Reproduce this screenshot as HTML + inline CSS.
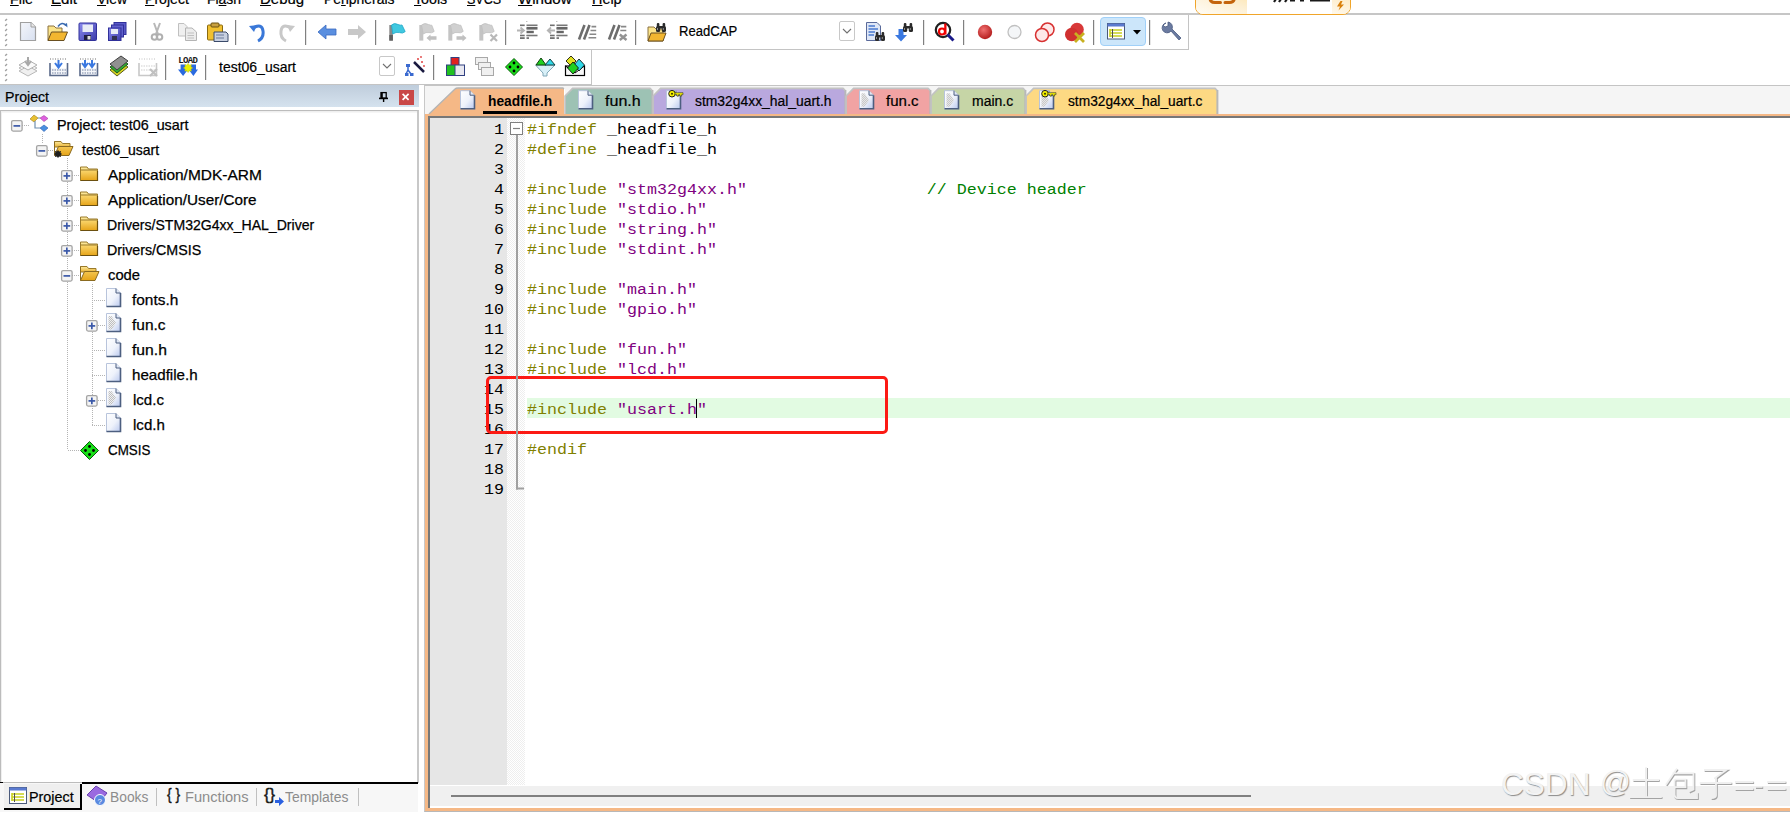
<!DOCTYPE html>
<html><head><meta charset="utf-8">
<style>
*{margin:0;padding:0;box-sizing:border-box}
html,body{width:1790px;height:814px;overflow:hidden;background:#fff;position:relative;font-family:"Liberation Sans",sans-serif;font-size:14px;color:#000}
.a{position:absolute}
.t{position:absolute;white-space:pre;line-height:1}
u{text-decoration:underline;text-underline-offset:1px}
.code{position:absolute;left:527px;top:120px;height:20px;font-family:"Liberation Mono",monospace;font-size:16.67px;line-height:20px;white-space:pre;transform:scaleY(0.86);transform-origin:0 15.6px}
.ln{position:absolute;left:430px;width:74px;top:120px;height:20px;font-family:"Liberation Mono",monospace;font-size:16.67px;line-height:20px;white-space:pre;text-align:right;transform:scaleY(0.9);transform-origin:0 15.6px}
.pp{color:#808000}.st{color:#800080}.cm{color:#008000}
svg.ov{position:absolute;left:0;top:0;width:1790px;height:814px;pointer-events:none}
</style></head><body>
<div class="t" style="left:10.01px;top:-7.67px;font-size:14.5px;color:#000;font-weight:normal;transform:scaleX(0.9865);transform-origin:0 0;;-webkit-text-stroke:0.2px #000"><u>F</u>ile</div>
<div class="t" style="left:50.96px;top:-7.67px;font-size:14.5px;color:#000;font-weight:normal;transform:scaleX(1.0435);transform-origin:0 0;;-webkit-text-stroke:0.2px #000"><u>E</u>dit</div>
<div class="t" style="left:96.50px;top:-7.67px;font-size:14.5px;color:#000;font-weight:normal;transform:scaleX(0.9623);transform-origin:0 0;;-webkit-text-stroke:0.2px #000"><u>V</u>iew</div>
<div class="t" style="left:144.73px;top:-7.67px;font-size:14.5px;color:#000;font-weight:normal;transform:scaleX(0.9728);transform-origin:0 0;;-webkit-text-stroke:0.2px #000"><u>P</u>roject</div>
<div class="t" style="left:207.04px;top:-7.67px;font-size:14.5px;color:#000;font-weight:normal;transform:scaleX(0.9595);transform-origin:0 0;;-webkit-text-stroke:0.2px #000">Fl<u>a</u>sh</div>
<div class="t" style="left:259.97px;top:-7.67px;font-size:14.5px;color:#000;font-weight:normal;transform:scaleX(1.0321);transform-origin:0 0;;-webkit-text-stroke:0.2px #000"><u>D</u>ebug</div>
<div class="t" style="left:323.74px;top:-7.67px;font-size:14.5px;color:#000;font-weight:normal;transform:scaleX(0.9613);transform-origin:0 0;;-webkit-text-stroke:0.2px #000">Pe<u>r</u>ipherals</div>
<div class="t" style="left:414.00px;top:-7.67px;font-size:14.5px;color:#000;font-weight:normal;transform:scaleX(0.9821);transform-origin:0 0;;-webkit-text-stroke:0.2px #000"><u>T</u>ools</div>
<div class="t" style="left:467.00px;top:-7.67px;font-size:14.5px;color:#000;font-weight:normal;transform:scaleX(0.8605);transform-origin:0 0;;-webkit-text-stroke:0.2px #000"><u>S</u>VCS</div>
<div class="t" style="left:518.40px;top:-7.67px;font-size:14.5px;color:#000;font-weight:normal;transform:scaleX(1.0403);transform-origin:0 0;;-webkit-text-stroke:0.2px #000"><u>W</u>indow</div>
<div class="t" style="left:591.51px;top:-7.67px;font-size:14.5px;color:#000;font-weight:normal;transform:scaleX(0.9911);transform-origin:0 0;;-webkit-text-stroke:0.2px #000"><u>H</u>elp</div>
<div class="a" style="left:0;top:13px;width:1790px;height:2px;background:#c6c6c6"></div>
<div class="a" style="left:1195px;top:-12px;width:156px;height:27px;border:1px solid #f0a52a;border-radius:8px;background:#fff;overflow:hidden"><div class="a" style="left:0;top:0;width:51px;height:27px;background:linear-gradient(20deg,#fffdf8 0%,#fdf0d4 55%,#fde2a6 100%)"></div><div class="a" style="left:136px;top:0;width:19px;height:27px;background:linear-gradient(20deg,#fffaf0,#fde4b4)"></div></div>
<div class="a" style="left:0;top:15px;width:1189px;height:35px;border-right:1px solid #c4c4c4;border-bottom:1px solid #c4c4c4;background:#fff"></div>
<div class="a" style="left:0;top:50px;width:592px;height:35px;border-right:1px solid #c4c4c4;border-bottom:1px solid #c4c4c4;background:#fff"></div>
<div class="t" style="left:678.67px;top:24.05px;font-size:14px;color:#000;font-weight:normal;transform:scaleX(0.9341);transform-origin:0 0;-webkit-text-stroke:0.2px #000">ReadCAP</div>
<div class="a" style="left:839px;top:21px;width:16px;height:20px;border:1px solid #c8c8c8;border-radius:2px;background:#fff"></div>
<div class="a" style="left:1100px;top:17px;width:46px;height:29px;background:#cce6fa;border:1px solid #a0d0f8;border-radius:4px"></div>
<div class="t" style="left:218.70px;top:60.15px;font-size:14px;color:#000;font-weight:normal;transform:scaleX(0.9992);transform-origin:0 0;;-webkit-text-stroke:0.2px #000">test06_usart</div>
<div class="a" style="left:379px;top:56px;width:16px;height:20px;border:1px solid #c8c8c8;border-radius:2px;background:#fff"></div>
<div class="a" style="left:0;top:85px;width:419px;height:22px;background:linear-gradient(#bfcddc,#d5e2ee)"></div>
<div class="t" style="left:4.59px;top:89.95px;font-size:14px;color:#000;font-weight:normal;transform:scaleX(1.0098);transform-origin:0 0;;-webkit-text-stroke:0.2px #000">Project</div>
<div class="a" style="left:399px;top:90px;width:15px;height:15px;background:#c94848"></div>
<div class="a" style="left:0;top:110px;width:419px;height:673px;border:1px solid #bcbcbc;border-right:2px solid #c8c8c8;background:#fff;box-shadow:inset 1px 1px 0 #efefef, inset 0 2px 0 #f6f6f6"></div>
<div class="t" style="left:57.01px;top:117.93px;font-size:14.5px;color:#000;font-weight:normal;transform:scaleX(0.9890);transform-origin:0 0;-webkit-text-stroke:0.25px #000">Project: test06_usart</div>
<div class="t" style="left:82.40px;top:142.93px;font-size:14.5px;color:#000;font-weight:normal;transform:scaleX(0.9665);transform-origin:0 0;-webkit-text-stroke:0.25px #000">test06_usart</div>
<div class="t" style="left:108.00px;top:167.93px;font-size:14.5px;color:#000;font-weight:normal;transform:scaleX(1.0660);transform-origin:0 0;-webkit-text-stroke:0.25px #000">Application/MDK-ARM</div>
<div class="t" style="left:108.00px;top:192.93px;font-size:14.5px;color:#000;font-weight:normal;transform:scaleX(1.0534);transform-origin:0 0;-webkit-text-stroke:0.25px #000">Application/User/Core</div>
<div class="t" style="left:107.43px;top:217.93px;font-size:14.5px;color:#000;font-weight:normal;transform:scaleX(0.9704);transform-origin:0 0;-webkit-text-stroke:0.25px #000">Drivers/STM32G4xx_HAL_Driver</div>
<div class="t" style="left:107.42px;top:242.93px;font-size:14.5px;color:#000;font-weight:normal;transform:scaleX(0.9820);transform-origin:0 0;-webkit-text-stroke:0.25px #000">Drivers/CMSIS</div>
<div class="t" style="left:107.70px;top:267.93px;font-size:14.5px;color:#000;font-weight:normal;transform:scaleX(1.0198);transform-origin:0 0;-webkit-text-stroke:0.25px #000">code</div>
<div class="t" style="left:132.30px;top:292.93px;font-size:14.5px;color:#000;font-weight:normal;transform:scaleX(1.0629);transform-origin:0 0;-webkit-text-stroke:0.25px #000">fonts.h</div>
<div class="t" style="left:132.30px;top:317.93px;font-size:14.5px;color:#000;font-weight:normal;transform:scaleX(1.0678);transform-origin:0 0;-webkit-text-stroke:0.25px #000">fun.c</div>
<div class="t" style="left:132.30px;top:342.93px;font-size:14.5px;color:#000;font-weight:normal;transform:scaleX(1.0812);transform-origin:0 0;-webkit-text-stroke:0.25px #000">fun.h</div>
<div class="t" style="left:131.66px;top:367.93px;font-size:14.5px;color:#000;font-weight:normal;transform:scaleX(1.0433);transform-origin:0 0;-webkit-text-stroke:0.25px #000">headfile.h</div>
<div class="t" style="left:132.70px;top:392.93px;font-size:14.5px;color:#000;font-weight:normal;transform:scaleX(1.0384);transform-origin:0 0;-webkit-text-stroke:0.25px #000">lcd.c</div>
<div class="t" style="left:132.70px;top:417.93px;font-size:14.5px;color:#000;font-weight:normal;transform:scaleX(1.0404);transform-origin:0 0;-webkit-text-stroke:0.25px #000">lcd.h</div>
<div class="t" style="left:108.20px;top:442.93px;font-size:14.5px;color:#000;font-weight:normal;transform:scaleX(0.9215);transform-origin:0 0;-webkit-text-stroke:0.25px #000">CMSIS</div>
<div class="a" style="left:0;top:783px;width:418px;height:29px;background:#f7f7f7"></div>
<div class="a" style="left:82px;top:782px;width:336px;height:2px;background:#000"></div>
<div class="a" style="left:0;top:782px;width:3px;height:1px;background:#000"></div>
<div class="a" style="left:4px;top:784px;width:78px;height:26px;background:#efefef;border-right:2px solid #000;border-bottom:2px solid #000"></div>
<div class="t" style="left:28.98px;top:789.95px;font-size:14px;color:#000;font-weight:normal;transform:scaleX(1.0238);transform-origin:0 0;;-webkit-text-stroke:0.2px #000">Project</div>
<div class="t" style="left:109.61px;top:789.95px;font-size:14px;color:#8c8c8c;font-weight:normal;transform:scaleX(0.9865);transform-origin:0 0;">Books</div>
<div class="t" style="left:166.50px;top:785.61px;font-size:17px;color:#181818;font-weight:normal;transform:scaleX(0.8231);transform-origin:0 0;-webkit-text-stroke:0.4px #181818">{ }</div>
<div class="t" style="left:184.75px;top:789.95px;font-size:14px;color:#8c8c8c;font-weight:normal;transform:scaleX(1.0470);transform-origin:0 0;">Functions</div>
<div class="t" style="left:263.50px;top:785.61px;font-size:17px;color:#181818;font-weight:normal;transform:scaleX(0.9848);transform-origin:0 0;-webkit-text-stroke:0.4px #181818">{}</div>
<div class="t" style="left:285.00px;top:789.95px;font-size:14px;color:#8c8c8c;font-weight:normal;transform:scaleX(0.9936);transform-origin:0 0;">Templates</div>
<div class="a" style="left:424px;top:85px;width:1366px;height:29px;background:#f5f5f5;border-top:1px solid #c4c4c4;border-left:1px solid #c8c8c8"></div>
<div class="a" style="left:424px;top:114px;width:1366px;height:698px;background:#f5b886;border-left:1px solid #c8c8c8;border-bottom:1px solid #b8b8b8"></div>
<div class="a" style="left:428px;top:116px;width:1362px;height:692px;background:#fff;border-left:2px solid #777;border-top:2px solid #777"></div>
<div class="a" style="left:430px;top:118px;width:77px;height:667px;background:#e6e6e6"></div>
<div class="a" style="left:430px;top:786px;width:1360px;height:20px;background:#f0f0f0"></div>
<div class="a" style="left:451px;top:795px;width:800px;height:2px;background:#808080"></div>
<svg class="ov" width="1790" height="814">
<defs>
 <linearGradient id="gDoc" x1="0" y1="0" x2="1" y2="1"><stop offset="0" stop-color="#ffffff"/><stop offset="0.55" stop-color="#eef2fb"/><stop offset="1" stop-color="#b9c8ee"/></linearGradient>
 <linearGradient id="gDocNew" x1="0" y1="0" x2="1" y2="1"><stop offset="0" stop-color="#f4f6fb"/><stop offset="1" stop-color="#d8e0f0"/></linearGradient>
 <linearGradient id="gFold" x1="0" y1="0" x2="0" y2="1"><stop offset="0" stop-color="#fdeba0"/><stop offset="1" stop-color="#e8b030"/></linearGradient>
 <linearGradient id="gFold2" x1="0" y1="0" x2="0" y2="1"><stop offset="0" stop-color="#fbd870"/><stop offset="1" stop-color="#e6a418"/></linearGradient>
 <linearGradient id="gSave" x1="0" y1="0" x2="1" y2="1"><stop offset="0" stop-color="#8c8cf0"/><stop offset="1" stop-color="#3a3aa8"/></linearGradient>
 <linearGradient id="gHdr" x1="0" y1="0" x2="0" y2="1"><stop offset="0" stop-color="#c1cfdd"/><stop offset="1" stop-color="#d9e4ef"/></linearGradient>
 <radialGradient id="gRed" cx="0.4" cy="0.35" r="0.7"><stop offset="0" stop-color="#f07070"/><stop offset="1" stop-color="#b01818"/></radialGradient>
 <pattern id="pChk" width="2" height="2" patternUnits="userSpaceOnUse"><rect width="2" height="2" fill="#ffffff"/><rect width="1" height="1" fill="#eeeeee"/><rect x="1" y="1" width="1" height="1" fill="#eeeeee"/></pattern>
 <pattern id="pDotV" width="1" height="2" patternUnits="userSpaceOnUse"><rect width="1" height="1" fill="#b4b4b4"/></pattern>
 <pattern id="pDotH" width="2" height="1" patternUnits="userSpaceOnUse"><rect width="1" height="1" fill="#b4b4b4"/></pattern>
 <pattern id="pChk2" width="2" height="2" patternUnits="userSpaceOnUse"><rect width="2" height="2" fill="#f0f0f0"/><rect width="1" height="1" fill="#b8b8b8"/><rect x="1" y="1" width="1" height="1" fill="#b8b8b8"/></pattern>
</defs>
<path d="M1210,-3 Q1209.5,2.5 1215,2.5 H1220.5" fill="none" stroke="#c4640c" stroke-width="3" stroke-linecap="round"/><path d="M1225,2.5 H1229.5 Q1234.5,2.5 1234.5,-3" fill="none" stroke="#c4640c" stroke-width="3" stroke-linecap="round"/><path d="M1274,2 L1276,-1 M1279,2 L1281,-1 M1285,2 L1287,-1" stroke="#1a1a1a" stroke-width="2.2"/><rect x="1290" y="-1" width="5" height="2.5" fill="#1a1a1a"/><rect x="1300" y="-1" width="4" height="2.5" fill="#1a1a1a"/><rect x="1310" y="-1" width="20" height="2.5" fill="#1a1a1a"/><path d="M1340.5,1 L1337,6.5 H1340 L1338.5,10.5 L1344,4.5 H1341 L1342.5,1 Z" fill="#d9800c"/><path d="M5.2,20.8 L7,19.0" stroke="#a0a0a0" stroke-width="1.4"/><path d="M5.2,25.9 L7,24.1" stroke="#a0a0a0" stroke-width="1.4"/><path d="M5.2,30.9 L7,29.1" stroke="#a0a0a0" stroke-width="1.4"/><path d="M5.2,35.9 L7,34.1" stroke="#a0a0a0" stroke-width="1.4"/><path d="M5.2,41.0 L7,39.2" stroke="#a0a0a0" stroke-width="1.4"/><path d="M5.2,46.0 L7,44.2" stroke="#a0a0a0" stroke-width="1.4"/><path d="M5.2,55.8 L7,54.0" stroke="#a0a0a0" stroke-width="1.4"/><path d="M5.2,60.8 L7,59.0" stroke="#a0a0a0" stroke-width="1.4"/><path d="M5.2,65.9 L7,64.1" stroke="#a0a0a0" stroke-width="1.4"/><path d="M5.2,71.0 L7,69.2" stroke="#a0a0a0" stroke-width="1.4"/><path d="M5.2,76.0 L7,74.2" stroke="#a0a0a0" stroke-width="1.4"/><path d="M5.2,81.0 L7,79.2" stroke="#a0a0a0" stroke-width="1.4"/><rect x="135" y="20" width="1.2" height="25" fill="#808080"/><rect x="235" y="20" width="1.2" height="25" fill="#808080"/><rect x="305" y="20" width="1.2" height="25" fill="#808080"/><rect x="375" y="20" width="1.2" height="25" fill="#808080"/><rect x="505" y="20" width="1.2" height="25" fill="#808080"/><rect x="635" y="20" width="1.2" height="25" fill="#808080"/><rect x="923" y="20" width="1.2" height="25" fill="#808080"/><rect x="963" y="20" width="1.2" height="25" fill="#808080"/><rect x="1093" y="20" width="1.2" height="25" fill="#808080"/><rect x="1149" y="20" width="1.2" height="25" fill="#808080"/><rect x="165" y="55" width="1.2" height="25" fill="#808080"/><rect x="205" y="55" width="1.2" height="25" fill="#808080"/><rect x="433" y="55" width="1.2" height="25" fill="#808080"/><g transform="translate(20,22)"><path d="M0.5,0.5 H11 L15.5,5 V18.5 H0.5 Z" fill="url(#gDocNew)" stroke="#a0a0a0" stroke-width="1.2"/><path d="M11,0.5 V5 H15.5" fill="#e8e8e8" stroke="#a0a0a0"/></g><g transform="translate(47,22)"><path d="M1,4 H7 L9,6 H15 V18.5 H1 Z" fill="#fbe48a" stroke="#8a7040"/><path d="M1,18.5 L4.5,10 H20.5 L17,18.5 Z" fill="#f2b630" stroke="#6a5020" stroke-width="1"/><path d="M11,4.5 Q15,-1 19,3.5" fill="none" stroke="#3a6ab0" stroke-width="1.6"/><path d="M17,2.5 L20.5,5.5 L20,1 Z" fill="#3a6ab0"/></g><g transform="translate(79,23)"><rect x="0" y="0" width="17.5" height="17.5" rx="1" fill="url(#gSave)" stroke="#30309a"/><rect x="3.5" y="1.5" width="10.5" height="7.5" fill="#e8ecf6"/><rect x="5" y="12" width="7" height="5" fill="#202040"/><rect x="8.5" y="13" width="3" height="3.5" fill="#e0e0e0"/></g><g transform="translate(108,22)"><rect x="6" y="0.5" width="12" height="12" fill="#5a5ac8" stroke="#30309a"/><rect x="3.5" y="3" width="12" height="12" fill="#6060cc" stroke="#30309a"/><rect x="0.5" y="6" width="12.5" height="12.5" fill="url(#gSave)" stroke="#30309a"/><rect x="3" y="7" width="7" height="5" fill="#e8ecf6"/><rect x="4" y="14" width="5" height="4" fill="#303050"/></g><g transform="translate(151,23)"><path d="M3,0 L7,11 M9,0 L5,11" stroke="#b8b8b8" stroke-width="2" fill="none"/><circle cx="3.5" cy="14" r="2.8" fill="none" stroke="#b0b0b0" stroke-width="2"/><circle cx="8.5" cy="14" r="2.8" fill="none" stroke="#b0b0b0" stroke-width="2"/></g><g transform="translate(178,23)"><path d="M0.5,0.5 H6 L9,3.5 V13 H0.5 Z" fill="#f0f0f0" stroke="#c0c0c0"/><path d="M7.5,5 H14 L18.5,9 V17.5 H7.5 Z" fill="#ececec" stroke="#b4b4b4"/><path d="M9.5,10 H16 M9.5,12.5 H16 M9.5,15 H16" stroke="#c0c0c0"/></g><g transform="translate(207,23)"><rect x="0.5" y="2" width="15" height="15" rx="1" fill="#f0c030" stroke="#8a6a10"/><rect x="4" y="0" width="8" height="4" rx="1" fill="#c8a040" stroke="#6a5010"/><path d="M7,9 H19 L21,11 V18.5 H7 Z" fill="#c8d0e0" stroke="#3a4a6a"/><path d="M9,12 H17 M9,15 H17" stroke="#6a7a9a"/></g><g transform="translate(249,22)"><path d="M4,6 Q13,1 14,9 Q15,16 9,19" fill="none" stroke="#3a78d8" stroke-width="3"/><path d="M0,4 L8,3 L5,10 Z" fill="#3a78d8"/></g><g transform="translate(280,22)"><path d="M11,6 Q2,1 1,9 Q0,16 6,19" fill="none" stroke="#c8c8c8" stroke-width="3"/><path d="M15,4 L7,3 L10,10 Z" fill="#c8c8c8"/></g><g transform="translate(318,24)"><path d="M0,8 L8,1 V5 H18 V11 H8 V15 Z" fill="#5a8fe0" stroke="#3a6ac0" stroke-width="0.8"/></g><g transform="translate(348,24)"><path d="M18,8 L10,1 V5 H0 V11 H10 V15 Z" fill="#c8c8c8"/></g><g transform="translate(389,23)"><rect x="0.3" y="2" width="3.6" height="15.6" fill="#8a8a8a"/><rect x="0.3" y="12" width="3.6" height="5.6" fill="#606060"/><path d="M2.5,2 Q5.5,-0.6 9,1.5 Q11.5,2.5 13,2 L16.2,8.6 Q13.5,11 10.5,9.6 Q7,8.6 3.8,11 Z" fill="#40c8e0" stroke="#20a8c8" stroke-width="0.8"/></g><g transform="translate(419,23)"><rect x="0.3" y="2" width="4" height="15.6" fill="#c4c4c4"/><path d="M2.5,2 Q6,-0.6 9.5,1.5 Q12,2.5 12.8,2.2 L15.2,8.4 Q12.5,10.5 10,9.6 Q7,8.8 4.3,11 Z" fill="#d0d0d0" stroke="#c0c0c0" stroke-width="0.8"/><path d="M7.5,15 L11.5,11.5 V13.3 H17.5 V16.7 H11.5 V18.5 Z" fill="#c0c0c0"/></g><g transform="translate(448,23)"><rect x="0.3" y="2" width="4" height="15.6" fill="#c4c4c4"/><path d="M2.5,2 Q6,-0.6 9.5,1.5 Q12,2.5 12.8,2.2 L15.2,8.4 Q12.5,10.5 10,9.6 Q7,8.8 4.3,11 Z" fill="#d0d0d0" stroke="#c0c0c0" stroke-width="0.8"/><path d="M18.5,15 L14.5,11.5 V13.3 H8.5 V16.7 H14.5 V18.5 Z" fill="#c0c0c0"/></g><g transform="translate(479,23)"><rect x="0.3" y="2" width="4" height="15.6" fill="#c4c4c4"/><path d="M2.5,2 Q6,-0.6 9.5,1.5 Q12,2.5 12.8,2.2 L15.2,8.4 Q12.5,10.5 10,9.6 Q7,8.8 4.3,11 Z" fill="#d0d0d0" stroke="#c0c0c0" stroke-width="0.8"/><path d="M11.5,11.5 L18,18 M18,11.5 L11.5,18" stroke="#b8b8b8" stroke-width="2.2"/></g><g transform="translate(517,20)"><rect x="3" y="4.5" width="4.7" height="1.6" fill="#707070"/><rect x="3" y="14.7" width="4.7" height="1.6" fill="#707070"/><rect x="3" y="17.2" width="4.7" height="1.8" fill="#707070"/><rect x="9.5" y="4.5" width="11" height="1.6" fill="#777"/><rect x="9.5" y="7" width="11" height="2.6" fill="#666"/><rect x="9.5" y="10.8" width="7.3" height="2.4" fill="#666"/><rect x="9.5" y="14.7" width="11" height="1.6" fill="#777"/><rect x="9.5" y="17.2" width="2.5" height="1.8" fill="#777"/><path d="M9.8,1 V20" stroke="#909090" stroke-width="0.8" stroke-dasharray="1,6"/><path d="M0,10.5 H6.5 M3.5,7.5 L7,10.5 L3.5,13.5" stroke="#b4b4b4" stroke-width="1.8" fill="none"/></g><g transform="translate(547,20)"><rect x="3" y="4.5" width="4.7" height="1.6" fill="#707070"/><rect x="3" y="14.7" width="4.7" height="1.6" fill="#707070"/><rect x="3" y="17.2" width="4.7" height="1.8" fill="#707070"/><rect x="9.5" y="4.5" width="11" height="1.6" fill="#777"/><rect x="9.5" y="7" width="11" height="2.6" fill="#666"/><rect x="9.5" y="10.8" width="7.3" height="2.4" fill="#666"/><rect x="9.5" y="14.7" width="11" height="1.6" fill="#777"/><rect x="9.5" y="17.2" width="2.5" height="1.8" fill="#777"/><path d="M9.8,1 V20" stroke="#909090" stroke-width="0.8" stroke-dasharray="1,6"/><path d="M8,10.5 H1 M4,7.5 L0.8,10.5 L4,13.5" stroke="#b4b4b4" stroke-width="1.8" fill="none"/></g><g transform="translate(578,20)"><path d="M1,19.5 L6.5,5 M6,19.5 L11.5,5" stroke="#6e6e6e" stroke-width="2.6"/><path d="M13.5,6.6 H18.2 M12.5,10.5 H18.2 M11.5,14.3 H18.2 M10.5,17.8 H18.2" stroke="#888" stroke-width="1.6"/></g><g transform="translate(608,20)"><path d="M1,19.5 L6.5,5 M6,19.5 L11.5,5" stroke="#6e6e6e" stroke-width="2.6"/><path d="M13,6.6 H18.3 M12.3,10.5 H18.3" stroke="#888" stroke-width="1.6"/><path d="M11.8,14.5 L18.5,20 M18.5,14.5 L11.8,20" stroke="#939393" stroke-width="2.4"/></g><g transform="translate(647,23)"><path d="M1,4 H7 L9,6 H16 V18 H1 Z" fill="#fbe48a" stroke="#8a7040"/><path d="M1,18 L4,10 H19 L16,18 Z" fill="#f2b630" stroke="#6a5020"/><g transform="translate(9,0)"><g fill="#2a2a2a"><rect x="0" y="3" width="4.2" height="6" rx="1.5"/><rect x="5.8" y="3" width="4.2" height="6" rx="1.5"/><rect x="0.8" y="0" width="2.6" height="4" rx="1"/><rect x="6.6" y="0" width="2.6" height="4" rx="1"/><rect x="3" y="3" width="4" height="2.5"/></g><rect x="1" y="5" width="1" height="2" fill="#909090"/><rect x="6.8" y="5" width="1" height="2" fill="#909090"/></g></g><path d="M843,29.0 L847.0,33.0 L851,29.0" fill="none" stroke="#707070" stroke-width="1.1"/><g transform="translate(866,22)"><path d="M0.5,0.5 H11 L14.5,4 V18.5 H0.5 Z" fill="#dfe7f6" stroke="#5a6a9a"/><path d="M2.5,4 H9 M2.5,7 H12 M2.5,10 H9 M2.5,13 H8" stroke="#4a7ad0" stroke-width="1.4"/><g transform="translate(9,10)"><g fill="#2a2a2a"><rect x="0" y="3" width="4.2" height="6" rx="1.5"/><rect x="5.8" y="3" width="4.2" height="6" rx="1.5"/><rect x="0.8" y="0" width="2.6" height="4" rx="1"/><rect x="6.6" y="0" width="2.6" height="4" rx="1"/><rect x="3" y="3" width="4" height="2.5"/></g><rect x="1" y="5" width="1" height="2" fill="#909090"/><rect x="6.8" y="5" width="1" height="2" fill="#909090"/></g></g><g transform="translate(895,22)"><path d="M3.5,7 V13 H0 L6,19.5 L12,13 H8.5 V7 Z" fill="#3a78e0"/><g transform="translate(8,1)"><g fill="#2a2a2a"><rect x="0" y="3" width="4.2" height="6" rx="1.5"/><rect x="5.8" y="3" width="4.2" height="6" rx="1.5"/><rect x="0.8" y="0" width="2.6" height="4" rx="1"/><rect x="6.6" y="0" width="2.6" height="4" rx="1"/><rect x="3" y="3" width="4" height="2.5"/></g><rect x="1" y="5" width="1" height="2" fill="#909090"/><rect x="6.8" y="5" width="1" height="2" fill="#909090"/></g></g><g transform="translate(935,22)"><circle cx="8" cy="8" r="7.2" fill="#fff" stroke="#202020" stroke-width="2.2"/><path d="M12.5,12.5 L18.5,18.5" stroke="#1a1a8a" stroke-width="3"/><circle cx="7" cy="9.5" r="3" fill="none" stroke="#f00000" stroke-width="2.2"/><rect x="9.2" y="1.5" width="2.3" height="11" fill="#f00000"/></g><g transform="translate(977,24)"><circle cx="8" cy="8" r="7.2" fill="url(#gRed)"/></g><g transform="translate(1007,24)"><circle cx="7.5" cy="8" r="6.5" fill="#f4f6f8" stroke="#c0c0c0" stroke-width="1.3"/></g><g transform="translate(1035,22)"><circle cx="12.5" cy="7.5" r="6.5" fill="#fde8e8" stroke="#d83030" stroke-width="1.5"/><circle cx="7" cy="13" r="6.5" fill="#fde8e8" stroke="#d83030" stroke-width="1.5"/></g><g transform="translate(1065,22)"><circle cx="12" cy="7.5" r="6.8" fill="#d83838"/><circle cx="6.8" cy="12.5" r="6.8" fill="#d03030"/><path d="M10,11 L19,20 M19,11 L10,20" stroke="#c8b020" stroke-width="2.8"/></g><g transform="translate(1107,23)"><rect x="0.5" y="0.5" width="17" height="15.5" fill="#fff" stroke="#4a5a7a"/><rect x="0.5" y="0.5" width="17" height="3" fill="#5a7ad0"/><path d="M3,6 V14 M3,7 H15 M3,10 H15 M3,13 H15" stroke="#c8d020" stroke-width="1.6"/><path d="M5.5,6 V15" stroke="#505050" stroke-width="1"/></g><path d="M1133,30 L1141,30 L1137,34.5 Z" fill="#000"/><g transform="translate(1162,22)"><path d="M4,1 A5,5 0 1 0 9,9 L17,18 L19,16 L10,7 A5,5 0 0 0 6,0 L6,4 L3,5 L1,3 Z" fill="#6a7aa0" stroke="#4a5a80" stroke-width="0.8"/></g><g transform="translate(18,57)"><path d="M1,11 L10,6 L19,11 L10,16 Z" fill="#f8f8f8" stroke="#b8b8b8"/><path d="M1,14 L10,9 L19,14 L10,19 Z" fill="#f0f0f0" stroke="#b8b8b8"/><path d="M1,8 L10,3 L19,8 L10,13 Z" fill="#fafafa" stroke="#b0b0b0"/><path d="M10,0 V7 M7,4 L10,8 L13,4" stroke="#a8a8a8" stroke-width="2" fill="none"/></g><g transform="translate(49,57)"><path d="M1,2 h17" stroke="#707070" stroke-width="1" stroke-dasharray="1,1.5"/><rect x="1" y="11" width="17" height="7.5" fill="#f4f6fa"/><path d="M1,6 V18.5 H18.5 V6" fill="none" stroke="#5a6a8a" stroke-width="1.6"/><path d="M3,13 h14 M3,16 h14" stroke="#7080a0" stroke-width="1.2" stroke-dasharray="1.5,1"/><path d="M9.5,3 V9 M6,6 L9.5,10.5 L13,6" stroke="#3a78e0" stroke-width="2" fill="none"/></g><g transform="translate(79,57)"><path d="M1,2 h17" stroke="#707070" stroke-width="1" stroke-dasharray="1,1.5"/><rect x="1" y="11" width="17" height="7.5" fill="#f4f6fa"/><path d="M1,6 V18.5 H18.5 V6" fill="none" stroke="#5a6a8a" stroke-width="1.6"/><path d="M3,13 h14 M3,16 h14" stroke="#7080a0" stroke-width="1.2" stroke-dasharray="1.5,1"/><path d="M6,3 V9 M3,6 L6,10 L9,6 M13,3 V9 M10,6 L13,10 L16,6" stroke="#3a78e0" stroke-width="2" fill="none"/></g><g transform="translate(109,57)"><path d="M1,13 L8,19 L19,10 L12,5 Z" fill="#d8d820" stroke="#5a5a20"/><path d="M1,10 L8,16 L19,7 L12,2 Z" fill="#30b030" stroke="#205020"/><path d="M1,7 L8,13 L19,4 L12,-1 Z" fill="#909090" stroke="#404040"/></g><g transform="translate(138,57)"><path d="M1,2 h17" stroke="#c0c0c0" stroke-width="1" stroke-dasharray="1,1.5"/><path d="M1,6 V18.5 H18.5 V6" fill="none" stroke="#c8c8c8" stroke-width="1.6"/><path d="M3,9 h14 M3,13 h14" stroke="#d0d0d0" stroke-width="1.2" stroke-dasharray="1.5,1"/><path d="M12,12 L19,19 M19,12 L12,19" stroke="#c0c0c0" stroke-width="2.2"/></g><g transform="translate(178,52)"><text x="0.3" y="11.4" font-family="Liberation Mono" font-weight="bold" font-size="9" letter-spacing="-0.1" textLength="19.5" fill="#1a1a1a">LOAD</text><path d="M2.6,12.5 H7.6 V17.5 H10 L5.1,24 L0,17.5 H2.6 Z M13,12.5 H18 V17.5 H20 L15.4,24 L10.5,17.5 H13 Z" fill="#2a6ae0"/></g><polygon points="192.70,67.90 190.87,69.05 191.35,71.15 189.25,70.67 188.10,72.50 186.95,70.67 184.85,71.15 185.33,69.05 183.50,67.90 185.33,66.75 184.85,64.65 186.95,65.13 188.10,63.30 189.25,65.13 191.35,64.65 190.87,66.75" fill="#e8f000" stroke="#c8c800" stroke-width="0.5"/><path d="M383,64.0 L387.0,68.0 L391,64.0" fill="none" stroke="#707070" stroke-width="1.1"/><g transform="translate(405,56)"><path d="M9,6 L19,16" stroke="#1a1a40" stroke-width="2.5"/><path d="M3,10 V14 M3,14 L1,18 M3,14 L6,18" stroke="#3a6ad0" stroke-width="1.5" fill="none"/><rect x="1" y="8" width="4" height="3" fill="#3a6ad0"/><rect x="0" y="17" width="3.5" height="3" fill="#3a6ad0"/><rect x="5" y="17" width="3.5" height="3" fill="#3a6ad0"/><circle cx="13" cy="3" r="1" fill="#e04040"/><circle cx="17" cy="6" r="1" fill="#e04040"/><circle cx="16" cy="1" r="0.9" fill="#e04040"/><circle cx="19" cy="10" r="0.9" fill="#e04040"/></g><g transform="translate(446,57)"><rect x="5" y="0.5" width="8" height="8" fill="#e02020" stroke="#304080"/><rect x="0.5" y="8" width="9" height="10.5" fill="#20c020" stroke="#304080"/><rect x="9" y="8" width="9.5" height="10.5" fill="#e8e8f0" stroke="#304080"/></g><g transform="translate(475,57)"><rect x="0.5" y="0.5" width="12" height="7" fill="#f0f0f0" stroke="#a8a8a8"/><rect x="3.5" y="5.5" width="12" height="7" fill="#f0f0f0" stroke="#a8a8a8"/><rect x="6.5" y="10.5" width="12" height="8" fill="#f0f0f0" stroke="#a8a8a8"/></g><g transform="translate(505,58)"><path d="M9.0,0.5 L17.5,9.0 L9.0,17.5 L0.5,9.0 Z" fill="#18e018" stroke="#0a5a0a" stroke-width="1"/><circle cx="9.0" cy="5.0" r="1.4" fill="#000"/><circle cx="9.0" cy="13.0" r="1.4" fill="#000"/><circle cx="5.0" cy="9.0" r="1.4" fill="#000"/><circle cx="13.0" cy="9.0" r="1.4" fill="#000"/></g><g transform="translate(535,57)"><path d="M0.5,8 L10,8 L20,8 L12,16 V19 H8 V16 Z" fill="#d8f0f8" stroke="#80a8b8"/><path d="M1,8 L6,1 L11,8 Z" fill="#20d020" stroke="#104010"/><path d="M10,8 L15,2 L20,8 Z" fill="#30d8e8" stroke="#104040"/></g><g transform="translate(565,56)"><rect x="0.5" y="10" width="19" height="9.5" fill="#f8f8f8" stroke="#000" stroke-width="1.2"/><path d="M0.5,10 L10,17 L19.5,10" fill="none" stroke="#000"/><path d="M6,0 L11,5 L6,10 L1,5 Z" fill="#e0e020" stroke="#000" stroke-width="0.8"/><path d="M14,3 L19.5,9 L14,15 L9,9 Z" fill="#30d8e8" stroke="#000" stroke-width="0.8"/><path d="M8,6 L13.5,12 L8,18 L2.5,12 Z" fill="#20d020" stroke="#000" stroke-width="0.8"/></g><rect x="381.2" y="92.6" width="5" height="5.6" fill="none" stroke="#000" stroke-width="1.3"/><rect x="380.6" y="92" width="2.2" height="6.5" fill="#000"/><rect x="379" y="97.6" width="9" height="1.6" fill="#000"/><rect x="382.9" y="99" width="1.4" height="3" fill="#000"/><path d="M402.6,93.8 L408.6,99.8 M408.6,93.8 L402.6,99.8" stroke="#fff" stroke-width="1.7"/><rect x="22" y="125" width="8" height="1" fill="url(#pDotH)"/><rect x="42" y="133" width="1" height="11" fill="url(#pDotV)"/><rect x="47" y="150" width="8" height="1" fill="url(#pDotH)"/><rect x="67" y="158" width="1" height="292" fill="url(#pDotV)"/><rect x="72" y="175" width="8" height="1" fill="url(#pDotH)"/><rect x="72" y="200" width="8" height="1" fill="url(#pDotH)"/><rect x="72" y="225" width="8" height="1" fill="url(#pDotH)"/><rect x="72" y="250" width="8" height="1" fill="url(#pDotH)"/><rect x="72" y="275" width="8" height="1" fill="url(#pDotH)"/><rect x="67" y="450" width="13" height="1" fill="url(#pDotH)"/><rect x="92" y="283" width="1" height="142" fill="url(#pDotV)"/><rect x="92" y="300" width="13" height="1" fill="url(#pDotH)"/><rect x="92" y="325" width="13" height="1" fill="url(#pDotH)"/><rect x="92" y="350" width="13" height="1" fill="url(#pDotH)"/><rect x="92" y="375" width="13" height="1" fill="url(#pDotH)"/><rect x="92" y="400" width="13" height="1" fill="url(#pDotH)"/><rect x="92" y="425" width="13" height="1" fill="url(#pDotH)"/><g transform="translate(11,120)"><rect x="0.6" y="0.6" width="10.5" height="10.5" rx="1.5" fill="#f4f4f4" stroke="#a4a4a4" stroke-width="1.3"/><path d="M2.5,5.9 H9.2" stroke="#3a58a8" stroke-width="1.7"/></g><g transform="translate(36,145)"><rect x="0.6" y="0.6" width="10.5" height="10.5" rx="1.5" fill="#f4f4f4" stroke="#a4a4a4" stroke-width="1.3"/><path d="M2.5,5.9 H9.2" stroke="#3a58a8" stroke-width="1.7"/></g><g transform="translate(61,170)"><rect x="0.6" y="0.6" width="10.5" height="10.5" rx="1.5" fill="#f4f4f4" stroke="#a4a4a4" stroke-width="1.3"/><path d="M2.5,5.9 H9.2" stroke="#3a58a8" stroke-width="1.7"/><path d="M5.85,2.6 V9.2" stroke="#3a58a8" stroke-width="1.7"/></g><g transform="translate(61,195)"><rect x="0.6" y="0.6" width="10.5" height="10.5" rx="1.5" fill="#f4f4f4" stroke="#a4a4a4" stroke-width="1.3"/><path d="M2.5,5.9 H9.2" stroke="#3a58a8" stroke-width="1.7"/><path d="M5.85,2.6 V9.2" stroke="#3a58a8" stroke-width="1.7"/></g><g transform="translate(61,220)"><rect x="0.6" y="0.6" width="10.5" height="10.5" rx="1.5" fill="#f4f4f4" stroke="#a4a4a4" stroke-width="1.3"/><path d="M2.5,5.9 H9.2" stroke="#3a58a8" stroke-width="1.7"/><path d="M5.85,2.6 V9.2" stroke="#3a58a8" stroke-width="1.7"/></g><g transform="translate(61,245)"><rect x="0.6" y="0.6" width="10.5" height="10.5" rx="1.5" fill="#f4f4f4" stroke="#a4a4a4" stroke-width="1.3"/><path d="M2.5,5.9 H9.2" stroke="#3a58a8" stroke-width="1.7"/><path d="M5.85,2.6 V9.2" stroke="#3a58a8" stroke-width="1.7"/></g><g transform="translate(61,270)"><rect x="0.6" y="0.6" width="10.5" height="10.5" rx="1.5" fill="#f4f4f4" stroke="#a4a4a4" stroke-width="1.3"/><path d="M2.5,5.9 H9.2" stroke="#3a58a8" stroke-width="1.7"/></g><g transform="translate(86,320)"><rect x="0.6" y="0.6" width="10.5" height="10.5" rx="1.5" fill="#f4f4f4" stroke="#a4a4a4" stroke-width="1.3"/><path d="M2.5,5.9 H9.2" stroke="#3a58a8" stroke-width="1.7"/><path d="M5.85,2.6 V9.2" stroke="#3a58a8" stroke-width="1.7"/></g><g transform="translate(86,395)"><rect x="0.6" y="0.6" width="10.5" height="10.5" rx="1.5" fill="#f4f4f4" stroke="#a4a4a4" stroke-width="1.3"/><path d="M2.5,5.9 H9.2" stroke="#3a58a8" stroke-width="1.7"/><path d="M5.85,2.6 V9.2" stroke="#3a58a8" stroke-width="1.7"/></g><g transform="translate(29,114)"><path d="M1,5 L5,1 L9,4 L5,8 Z" fill="#e8c030" stroke="#a08020" stroke-width="0.6"/><path d="M6,7 V14 H11" fill="none" stroke="#7090b0" stroke-width="1.2"/><path d="M11,4 L15,1.5 L19,4.5 L15,7.5 Z" fill="#e060e0" stroke="#a040a0" stroke-width="0.6"/><path d="M11,14 L15,11 L19,14 L15,17.5 Z" fill="#4a90e0" stroke="#2a60b0" stroke-width="0.6"/><path d="M9,4 H11" stroke="#7090b0"/></g><g transform="translate(54,140)"><path d="M0.5,1.5 H7 L8.5,3.5 H16 V7 H0.5 Z" fill="url(#gFold)" stroke="#9a7a2a" stroke-width="1"/><path d="M0.5,1.5 V15.5 H15 L19,6.5 H4.5 L0.5,15.5" fill="url(#gFold2)" stroke="#8a6a20" stroke-width="1"/></g><circle cx="58" cy="154" r="3" fill="#202020"/><path d="M54,154 h8 M58,150 v8 M55,151 l6,6 M61,151 l-6,6" stroke="#202020" stroke-width="0.8"/><g transform="translate(80,165)"><path d="M0.5,2 H7 L8.5,4 H17.5 V15.5 H0.5 Z" fill="url(#gFold)" stroke="#9a7a2a" stroke-width="1"/><rect x="0.5" y="5" width="17" height="10.5" fill="url(#gFold2)" stroke="#9a7a2a" stroke-width="1"/><path d="M1,15.5 H17.5 V6" fill="none" stroke="#6b5010" stroke-width="1.2"/></g><g transform="translate(80,190)"><path d="M0.5,2 H7 L8.5,4 H17.5 V15.5 H0.5 Z" fill="url(#gFold)" stroke="#9a7a2a" stroke-width="1"/><rect x="0.5" y="5" width="17" height="10.5" fill="url(#gFold2)" stroke="#9a7a2a" stroke-width="1"/><path d="M1,15.5 H17.5 V6" fill="none" stroke="#6b5010" stroke-width="1.2"/></g><g transform="translate(80,215)"><path d="M0.5,2 H7 L8.5,4 H17.5 V15.5 H0.5 Z" fill="url(#gFold)" stroke="#9a7a2a" stroke-width="1"/><rect x="0.5" y="5" width="17" height="10.5" fill="url(#gFold2)" stroke="#9a7a2a" stroke-width="1"/><path d="M1,15.5 H17.5 V6" fill="none" stroke="#6b5010" stroke-width="1.2"/></g><g transform="translate(80,240)"><path d="M0.5,2 H7 L8.5,4 H17.5 V15.5 H0.5 Z" fill="url(#gFold)" stroke="#9a7a2a" stroke-width="1"/><rect x="0.5" y="5" width="17" height="10.5" fill="url(#gFold2)" stroke="#9a7a2a" stroke-width="1"/><path d="M1,15.5 H17.5 V6" fill="none" stroke="#6b5010" stroke-width="1.2"/></g><g transform="translate(80,265)"><path d="M0.5,1.5 H7 L8.5,3.5 H16 V7 H0.5 Z" fill="url(#gFold)" stroke="#9a7a2a" stroke-width="1"/><path d="M0.5,1.5 V15.5 H15 L19,6.5 H4.5 L0.5,15.5" fill="url(#gFold2)" stroke="#8a6a20" stroke-width="1"/></g><g transform="translate(106,288)"><path d="M0.5,0.5 H10 L14.5,5 V18.5 H0.5 Z" fill="url(#gDoc)" stroke="#b8c4dc" stroke-width="1"/><path d="M14.5,5 V18.5 H0.5" fill="none" stroke="#4d5f80" stroke-width="1.6"/><path d="M10,0.5 V5 H14.5" fill="#dfe6f4" stroke="#4d5f80" stroke-width="1"/></g><g transform="translate(106,313)"><path d="M0.5,0.5 H10 L14.5,5 V18.5 H0.5 Z" fill="url(#gDoc)" stroke="#b8c4dc" stroke-width="1"/><path d="M14.5,5 V18.5 H0.5" fill="none" stroke="#4d5f80" stroke-width="1.6"/><path d="M10,0.5 V5 H14.5" fill="#dfe6f4" stroke="#4d5f80" stroke-width="1"/><path d="M2.5,3 L5.5,3 L10,10 L5.5,16.5 L2.5,16.5 Z" fill="url(#pChk2)" opacity="0.9"/></g><g transform="translate(106,338)"><path d="M0.5,0.5 H10 L14.5,5 V18.5 H0.5 Z" fill="url(#gDoc)" stroke="#b8c4dc" stroke-width="1"/><path d="M14.5,5 V18.5 H0.5" fill="none" stroke="#4d5f80" stroke-width="1.6"/><path d="M10,0.5 V5 H14.5" fill="#dfe6f4" stroke="#4d5f80" stroke-width="1"/></g><g transform="translate(106,363)"><path d="M0.5,0.5 H10 L14.5,5 V18.5 H0.5 Z" fill="url(#gDoc)" stroke="#b8c4dc" stroke-width="1"/><path d="M14.5,5 V18.5 H0.5" fill="none" stroke="#4d5f80" stroke-width="1.6"/><path d="M10,0.5 V5 H14.5" fill="#dfe6f4" stroke="#4d5f80" stroke-width="1"/></g><g transform="translate(106,388)"><path d="M0.5,0.5 H10 L14.5,5 V18.5 H0.5 Z" fill="url(#gDoc)" stroke="#b8c4dc" stroke-width="1"/><path d="M14.5,5 V18.5 H0.5" fill="none" stroke="#4d5f80" stroke-width="1.6"/><path d="M10,0.5 V5 H14.5" fill="#dfe6f4" stroke="#4d5f80" stroke-width="1"/><path d="M2.5,3 L5.5,3 L10,10 L5.5,16.5 L2.5,16.5 Z" fill="url(#pChk2)" opacity="0.9"/></g><g transform="translate(106,413)"><path d="M0.5,0.5 H10 L14.5,5 V18.5 H0.5 Z" fill="url(#gDoc)" stroke="#b8c4dc" stroke-width="1"/><path d="M14.5,5 V18.5 H0.5" fill="none" stroke="#4d5f80" stroke-width="1.6"/><path d="M10,0.5 V5 H14.5" fill="#dfe6f4" stroke="#4d5f80" stroke-width="1"/></g><g transform="translate(80,441)"><path d="M9.5,0.5 L18.5,9.5 L9.5,18.5 L0.5,9.5 Z" fill="#18e018" stroke="#0a5a0a" stroke-width="1"/><circle cx="9.5" cy="5.5" r="1.4" fill="#000"/><circle cx="9.5" cy="13.5" r="1.4" fill="#000"/><circle cx="5.5" cy="9.5" r="1.4" fill="#000"/><circle cx="13.5" cy="9.5" r="1.4" fill="#000"/></g><g transform="translate(9,787)"><rect x="0.5" y="0.5" width="17" height="16" fill="#fff" stroke="#4a5a7a"/><rect x="0.5" y="0.5" width="17" height="3" fill="#5a7ad0"/><path d="M3,6 V14 M3,7 H15 M3,10 H15 M3,13 H15" stroke="#c8d020" stroke-width="1.6"/><path d="M5.5,6 V15" stroke="#505050"/></g><g transform="translate(87,786)"><path d="M0,9 L9,0 L20,7 L12,17 Z" fill="#9a6ae0" stroke="#6a40b0"/><circle cx="13" cy="14" r="5.5" fill="#5a8ae0" stroke="#fff" stroke-width="1"/><text x="10.5" y="17.5" font-size="8" font-family="Liberation Sans" fill="#fff">?</text></g><rect x="156" y="788" width="1" height="18" fill="#c0c0c0"/><rect x="256" y="788" width="1" height="18" fill="#c0c0c0"/><path d="M275,800 H279 V797 L284,801.5 L279,806 V803 H275 Z" fill="#2a60e0"/><rect x="358" y="788" width="1" height="18" fill="#c0c0c0"/><rect x="507" y="118" width="18" height="667" fill="url(#pChk)"/><path d="M429,114 L455,89 Q456,88 458,88 H563 L564,89.5 V114 Z" fill="#f5b886"/><path d="M429,114 L455,89 Q456,88 458,88 H563 L564,89.5" fill="none" stroke="#b4b4b4" stroke-width="1.3"/><rect x="564" y="89" width="1" height="25" fill="#fff"/><path d="M565,114 V96 L572,89 H650 L652,91 V114 Z" fill="#9dc2b4"/><path d="M565.1,114 V96 L572.6,88.3 H650 L652,90.3" fill="none" stroke="#c2c2c2" stroke-width="1.7"/><rect x="651.4" y="90" width="2" height="24" fill="#b8b8b8"/><path d="M653,114 V96 L660,89 H843 L845,91 V114 Z" fill="#b9a8de"/><path d="M653.1,114 V96 L660.6,88.3 H843 L845,90.3" fill="none" stroke="#c2c2c2" stroke-width="1.7"/><rect x="844.4" y="90" width="2" height="24" fill="#b8b8b8"/><path d="M846,114 V96 L853,89 H928 L930,91 V114 Z" fill="#f1a3a3"/><path d="M846.1,114 V96 L853.6,88.3 H928 L930,90.3" fill="none" stroke="#c2c2c2" stroke-width="1.7"/><rect x="929.4" y="90" width="2" height="24" fill="#b8b8b8"/><path d="M931,114 V96 L938,89 H1023 L1025,91 V114 Z" fill="#c6d5a6"/><path d="M931.1,114 V96 L938.6,88.3 H1023 L1025,90.3" fill="none" stroke="#c2c2c2" stroke-width="1.7"/><rect x="1024.4" y="90" width="2" height="24" fill="#b8b8b8"/><path d="M1026,114 V96 L1033,89 H1215 L1217,91 V114 Z" fill="#fdd983"/><path d="M1026.1,114 V96 L1033.6,88.3 H1215 L1217,90.3" fill="none" stroke="#c2c2c2" stroke-width="1.7"/><rect x="1216.4" y="90" width="2" height="24" fill="#b8b8b8"/></svg>
<div class="t" style="left:488.30px;top:93.95px;font-size:14px;color:#000;font-weight:bold;transform:scaleX(0.9831);transform-origin:0 0;">headfile.h</div>
<div class="a" style="left:483px;top:111px;width:74px;height:2.5px;background:#000"></div>
<div class="t" style="left:604.50px;top:93.95px;font-size:14px;color:#000;font-weight:normal;transform:scaleX(1.1466);transform-origin:0 0;;-webkit-text-stroke:0.2px #000">fun.h</div>
<div class="t" style="left:694.50px;top:93.95px;font-size:14px;color:#000;font-weight:normal;transform:scaleX(0.9908);transform-origin:0 0;;-webkit-text-stroke:0.2px #000">stm32g4xx_hal_uart.h</div>
<div class="t" style="left:886.40px;top:93.95px;font-size:14px;color:#000;font-weight:normal;transform:scaleX(1.0741);transform-origin:0 0;;-webkit-text-stroke:0.2px #000">fun.c</div>
<div class="t" style="left:971.80px;top:93.95px;font-size:14px;color:#000;font-weight:normal;transform:scaleX(0.9992);transform-origin:0 0;;-webkit-text-stroke:0.2px #000">main.c</div>
<div class="t" style="left:1068.00px;top:93.95px;font-size:14px;color:#000;font-weight:normal;transform:scaleX(0.9813);transform-origin:0 0;;-webkit-text-stroke:0.2px #000">stm32g4xx_hal_uart.c</div>
<div class="a" style="left:425px;top:114px;width:1365px;height:2px;background:#f5b886"></div>
<div class="ln" style="top:120px">1</div>
<div class="ln" style="top:140px">2</div>
<div class="ln" style="top:160px">3</div>
<div class="ln" style="top:180px">4</div>
<div class="ln" style="top:200px">5</div>
<div class="ln" style="top:220px">6</div>
<div class="ln" style="top:240px">7</div>
<div class="ln" style="top:260px">8</div>
<div class="ln" style="top:280px">9</div>
<div class="ln" style="top:300px">10</div>
<div class="ln" style="top:320px">11</div>
<div class="ln" style="top:340px">12</div>
<div class="ln" style="top:360px">13</div>
<div class="ln" style="top:380px">14</div>
<div class="ln" style="top:400px">15</div>
<div class="ln" style="top:420px">16</div>
<div class="ln" style="top:440px">17</div>
<div class="ln" style="top:460px">18</div>
<div class="ln" style="top:480px">19</div>
<div class="a" style="left:527px;top:398px;width:1263px;height:20px;background:#e2fbe2"></div>
<div class="code" style="top:120px"><span class="pp">#ifndef</span> _headfile_h</div>
<div class="code" style="top:140px"><span class="pp">#define</span> _headfile_h</div>
<div class="code" style="top:180px"><span class="pp">#include</span> <span class="st">"stm32g4xx.h"</span>                  <span class="cm">// Device header</span></div>
<div class="code" style="top:200px"><span class="pp">#include</span> <span class="st">"stdio.h"</span></div>
<div class="code" style="top:220px"><span class="pp">#include</span> <span class="st">"string.h"</span></div>
<div class="code" style="top:240px"><span class="pp">#include</span> <span class="st">"stdint.h"</span></div>
<div class="code" style="top:280px"><span class="pp">#include</span> <span class="st">"main.h"</span></div>
<div class="code" style="top:300px"><span class="pp">#include</span> <span class="st">"gpio.h"</span></div>
<div class="code" style="top:340px"><span class="pp">#include</span> <span class="st">"fun.h"</span></div>
<div class="code" style="top:360px"><span class="pp">#include</span> <span class="st">"lcd.h"</span></div>
<div class="code" style="top:400px"><span class="pp">#include</span> <span class="st">"usart.h"</span></div>
<div class="code" style="top:440px"><span class="pp">#endif</span></div>
<div class="a" style="left:696px;top:399px;width:1px;height:19px;background:#000"></div>
<div class="a" style="left:486.3px;top:375.8px;width:401.5px;height:58px;border:3.6px solid #fc1a14;border-radius:5px"></div>
<div class="t" style="left:1500.61px;top:768.31px;font-size:32px;color:#f3f3f3;font-weight:normal;transform:scaleX(0.9867);transform-origin:0 0;text-shadow:0.8px 1px 1px #8a8a8a">CSDN</div>
<div class="t" style="left:1599.96px;top:767.11px;font-size:30px;color:#f3f3f3;font-weight:normal;transform:scaleX(1.0192);transform-origin:0 0;text-shadow:0.8px 1px 1px #8a8a8a">@</div>
<svg class="ov" width="1790" height="814"><g transform="translate(460,90.2)"><path d="M0.5,0.5 H10 L14.5,5 V18.5 H0.5 Z" fill="url(#gDoc)" stroke="#b8c4dc" stroke-width="1"/><path d="M14.5,5 V18.5 H0.5" fill="none" stroke="#4d5f80" stroke-width="1.6"/><path d="M10,0.5 V5 H14.5" fill="#dfe6f4" stroke="#4d5f80" stroke-width="1"/></g><g transform="translate(578,90.2)"><path d="M0.5,0.5 H10 L14.5,5 V18.5 H0.5 Z" fill="url(#gDoc)" stroke="#b8c4dc" stroke-width="1"/><path d="M14.5,5 V18.5 H0.5" fill="none" stroke="#4d5f80" stroke-width="1.6"/><path d="M10,0.5 V5 H14.5" fill="#dfe6f4" stroke="#4d5f80" stroke-width="1"/></g><g transform="translate(666,90.2)"><path d="M0.5,0.5 H10 L14.5,5 V18.5 H0.5 Z" fill="url(#gDoc)" stroke="#b8c4dc" stroke-width="1"/><path d="M14.5,5 V18.5 H0.5" fill="none" stroke="#4d5f80" stroke-width="1.6"/><path d="M10,0.5 V5 H14.5" fill="#dfe6f4" stroke="#4d5f80" stroke-width="1"/><circle cx="6" cy="3.5" r="3.3" fill="#f4f000" stroke="#202020" stroke-width="1"/><circle cx="6" cy="3.5" r="1" fill="#303000"/><path d="M9,2.5 H17 V4.5 H15.5 V6 H14 V4.5 H12.5 V6 H11 V4.5 H9 Z" fill="#f4f000" stroke="#303030" stroke-width="0.6"/></g><g transform="translate(859,90.2)"><path d="M0.5,0.5 H10 L14.5,5 V18.5 H0.5 Z" fill="url(#gDoc)" stroke="#b8c4dc" stroke-width="1"/><path d="M14.5,5 V18.5 H0.5" fill="none" stroke="#4d5f80" stroke-width="1.6"/><path d="M10,0.5 V5 H14.5" fill="#dfe6f4" stroke="#4d5f80" stroke-width="1"/><path d="M2.5,3 L5.5,3 L10,10 L5.5,16.5 L2.5,16.5 Z" fill="url(#pChk2)" opacity="0.9"/></g><g transform="translate(944,90.2)"><path d="M0.5,0.5 H10 L14.5,5 V18.5 H0.5 Z" fill="url(#gDoc)" stroke="#b8c4dc" stroke-width="1"/><path d="M14.5,5 V18.5 H0.5" fill="none" stroke="#4d5f80" stroke-width="1.6"/><path d="M10,0.5 V5 H14.5" fill="#dfe6f4" stroke="#4d5f80" stroke-width="1"/><path d="M2.5,3 L5.5,3 L10,10 L5.5,16.5 L2.5,16.5 Z" fill="url(#pChk2)" opacity="0.9"/></g><g transform="translate(1039,90.2)"><path d="M0.5,0.5 H10 L14.5,5 V18.5 H0.5 Z" fill="url(#gDoc)" stroke="#b8c4dc" stroke-width="1"/><path d="M14.5,5 V18.5 H0.5" fill="none" stroke="#4d5f80" stroke-width="1.6"/><path d="M10,0.5 V5 H14.5" fill="#dfe6f4" stroke="#4d5f80" stroke-width="1"/><path d="M2.5,3 L5.5,3 L10,10 L5.5,16.5 L2.5,16.5 Z" fill="url(#pChk2)" opacity="0.9"/><circle cx="6" cy="3.5" r="3.3" fill="#f4f000" stroke="#202020" stroke-width="1"/><circle cx="6" cy="3.5" r="1" fill="#303000"/><path d="M9,2.5 H17 V4.5 H15.5 V6 H14 V4.5 H12.5 V6 H11 V4.5 H9 Z" fill="#f4f000" stroke="#303030" stroke-width="0.6"/></g><rect x="510.5" y="122.5" width="12" height="12" fill="#fff" stroke="#808080"/><path d="M513,128.5 H520" stroke="#808080" stroke-width="1.2"/><rect x="516" y="135" width="2" height="354.5" fill="#a0a0a0"/><rect x="516" y="487.5" width="8" height="2" fill="#a0a0a0"/><g fill="none" stroke="#a4a4a4" stroke-width="2.2" transform="translate(0.7,0.9)"><path d="M1632.8,780 H1659 M1646.1,767.2 V797 M1629.5,797.1 H1661.8"/><path d="M1677,768.6 L1666,784.8 M1672.5,773.4 H1693.5 V789.5 L1689,791.5 M1674.6,779.6 H1685.5 V787.2 H1674.6 M1674.6,779.6 V795 Q1674.6,798 1678,798 H1697 V792.4"/><path d="M1704,770 H1726.4 L1714.5,778.6 M1716,778 V795.5 Q1716,798 1711,798 M1699.8,783 H1731.6"/><path d="M1735,782 H1753.4 M1735,789 H1753.4 M1755.3,786.9 H1762.5 M1767.2,782 H1785.7 M1767.2,789 H1785.7"/></g><g fill="none" stroke="#f0f0f0" stroke-width="1.8"><path d="M1632.8,780 H1659 M1646.1,767.2 V797 M1629.5,797.1 H1661.8"/><path d="M1677,768.6 L1666,784.8 M1672.5,773.4 H1693.5 V789.5 L1689,791.5 M1674.6,779.6 H1685.5 V787.2 H1674.6 M1674.6,779.6 V795 Q1674.6,798 1678,798 H1697 V792.4"/><path d="M1704,770 H1726.4 L1714.5,778.6 M1716,778 V795.5 Q1716,798 1711,798 M1699.8,783 H1731.6"/><path d="M1735,782 H1753.4 M1735,789 H1753.4 M1755.3,786.9 H1762.5 M1767.2,782 H1785.7 M1767.2,789 H1785.7"/></g></svg>
</body></html>
